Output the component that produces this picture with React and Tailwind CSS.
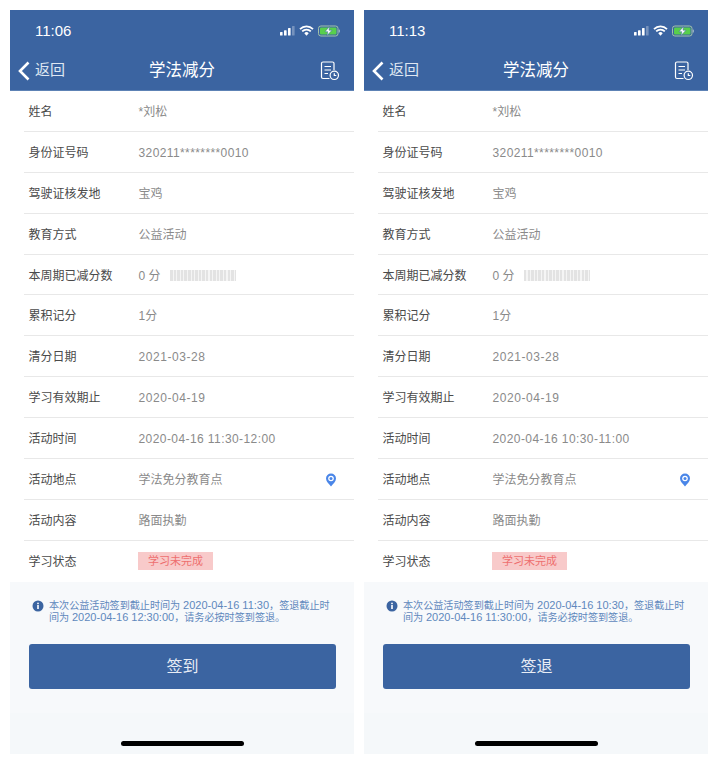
const FONT = '"Liberation Sans", "Noto Sans CJK SC", sans-serif';

function StatusIcons() {
  return (
    <svg width="60" height="12" viewBox="0 0 60 12" className="block">
      <rect x="0" y="7" width="2.600" height="3.500" rx="0.600" fill="#fff" />
      <rect x="4" y="5.200" width="2.600" height="5.300" rx="0.600" fill="#fff" />
      <rect x="8" y="3" width="2.600" height="7.500" rx="0.600" fill="#fff" />
      <rect x="12" y="1" width="2.600" height="9.500" rx="0.600" fill="#fff" fillOpacity="0.3" />
      <path d="M20 4.200a9 9 0 0 1 13 0M22.200 6.400a6 6 0 0 1 8.600 0" fill="none" stroke="#fff" strokeWidth="1.700" />
      <path d="M24.300 8.300a3 3 0 0 1 4.400 0L26.500 10.800z" fill="#fff" />
      <rect x="38.500" y="1" width="19.500" height="10" rx="2.400" fill="none" stroke="#a3c4a8" strokeWidth="1" />
      <rect x="40" y="2.500" width="16.500" height="7" rx="1" fill="#58cf4c" />
      <rect x="58.700" y="4.500" width="1.200" height="3" rx="0.600" fill="#9fb4c9" />
      <path d="M49.500 1.500 45 6.700H47.800L47 10.500 52 5.200H49z" fill="#fff" stroke="#3b64a1" strokeWidth="0.500" />
    </svg>
  );
}

function RecordIcon() {
  return (
    <svg width="20" height="20" viewBox="0 0 20 20" fill="none" stroke="#fff" strokeWidth="1.200" className="block">
      <path d="M9.500 17.500H3a1.500 1.500 0 0 1-1.500-1.500V2.500A1.500 1.500 0 0 1 3 1h9.500A1.500 1.500 0 0 1 14 2.500V9" />
      <path d="M4.500 5.500h6.500M4.500 9h6.500M4.500 12.500h3.500" />
      <circle cx="14.300" cy="14.300" r="4.200" />
      <path d="M14.300 12.300v2.200h2" />
    </svg>
  );
}

function Row({ label, children, last }) {
  return (
    <div className={`ml-[14px] flex h-[40.9px] items-center pt-[2px] ${last ? "" : "border-b border-[#e8e8e8]"}`}>
      <div className="w-[114.5px] shrink-0 pl-[4.5px] text-[12px] text-[#4a4a4a]">{label}</div>
      <div className="flex min-w-0 flex-1 items-center pr-[17px] text-[12px] text-[#8a8a8a]">{children}</div>
    </div>
  );
}

function Latin({ children }) {
  return <span className="text-[11px] leading-[10px]">{children}</span>;
}

function Phone({ time, activity, deadlineIn, deadlineOut, action }) {
  return (
    <div className="flex h-[744px] w-[344px] flex-col bg-white">
      <div className="h-[81px] shrink-0 border-b border-[#5d82b5] bg-[#3b64a1] text-white">
        <div className="flex h-[41px] items-center justify-between pl-[25px] pr-[14px]">
          <span className="text-[15px] leading-none font-medium">{time}</span>
          <StatusIcons />
        </div>
        <div className="relative flex h-[39px] items-center justify-between pl-[8px] pr-[14px]">
          <div className="flex items-center gap-[5px]">
            <svg width="12" height="20" viewBox="0 0 12 20" fill="none" stroke="#fff" strokeWidth="2.600" className="block">
              <path d="M10.500 1.500 2 10l8.500 8.500" />
            </svg>
            <span className="text-[15px] text-[#dfe7f2]">返回</span>
          </div>
          <span className="absolute left-0 right-0 text-center text-[16.500px]">学法减分</span>
          <RecordIcon />
        </div>
      </div>
      <div className="flex-1">
        <Row label="姓名">*刘松</Row>
        <Row label="身份证号码"><span className="tracking-[0.4px]">320211********0010</span></Row>
        <Row label="驾驶证核发地">宝鸡</Row>
        <Row label="教育方式">公益活动</Row>
        <Row label="本周期已减分数">
          <span>0 分</span>
          <span className="ml-[9.500px] h-[11px] w-[66px] bg-[repeating-linear-gradient(90deg,#e3e3e3_0,#e3e3e3_2.500px,#f5f5f5_2.500px,#f5f5f5_3.600px)]" />
        </Row>
        <Row label="累积记分">1分</Row>
        <Row label="清分日期"><span className="tracking-[0.55px]">2021-03-28</span></Row>
        <Row label="学习有效期止"><span className="tracking-[0.55px]">2020-04-19</span></Row>
        <Row label="活动时间"><span className="tracking-[0.42px]">{activity}</span></Row>
        <Row label="活动地点">
          <span className="flex-1">学法免分教育点</span>
          <svg width="12" height="14" viewBox="0 0 12 14" className="block">
            <path d="M6 .5a5 5 0 0 1 5 5c0 3-3 5.500-5 8-2-2.500-5-5-5-8a5 5 0 0 1 5-5z" fill="#4a86e8" />
            <circle cx="6" cy="5.500" r="2.800" fill="#fff" />
            <circle cx="6" cy="5.500" r="1.500" fill="#4a86e8" />
          </svg>
        </Row>
        <Row label="活动内容">路面执勤</Row>
        <Row label="学习状态" last>
          <span className="-ml-[0.5px] -mt-[2px] flex h-[18px] w-[75px] items-center justify-center bg-[#f8caca] text-[11px] text-[#ee6f6f]">学习未完成</span>
        </Row>
      </div>
      <div className="flex h-[172px] shrink-0 flex-col bg-[#f7f9fb]">
        <div className="flex-1 px-[19px]">
          <div className="mt-[18px] flex items-start gap-[5px] pl-[3px]">
            <svg width="12" height="12" viewBox="0 0 12 12" className="shrink-0">
              <circle cx="6" cy="6" r="5.500" fill="#3b64a1" />
              <rect x="5.200" y="5" width="1.600" height="4" fill="#fff" />
              <rect x="5.200" y="2.700" width="1.600" height="1.500" fill="#fff" />
            </svg>
            <p className="text-[10.100px] leading-[12px] text-[#5f88bd]">
              本次公益活动签到截止时间为 <Latin>{deadlineIn}</Latin>，签退截止时间为 <Latin>{deadlineOut}</Latin>，请务必按时签到签退。
            </p>
          </div>
          <div className="mt-[20px] flex h-[45px] w-[307px] items-center justify-center rounded-[3px] bg-[#3b64a1] text-[16px] text-[#e8edf5]">
            {action}
          </div>
        </div>
        <div className="flex h-[41px] items-start justify-center bg-[#f5f8fa] pt-[28px]">
          <div className="h-[5px] w-[123px] rounded-full bg-black" />
        </div>
      </div>
    </div>
  );
}

export default function App() {
  return (
    <div className="flex h-[764px] w-[718px] gap-[10px] bg-white pl-[10px] pt-[10px]" style={{ fontFamily: FONT }}>
      <Phone time="11:06" activity="2020-04-16 11:30-12:00" deadlineIn="2020-04-16 11:30" deadlineOut="2020-04-16 12:30:00" action="签到" />
      <Phone time="11:13" activity="2020-04-16 10:30-11:00" deadlineIn="2020-04-16 10:30" deadlineOut="2020-04-16 11:30:00" action="签退" />
    </div>
  );
}
